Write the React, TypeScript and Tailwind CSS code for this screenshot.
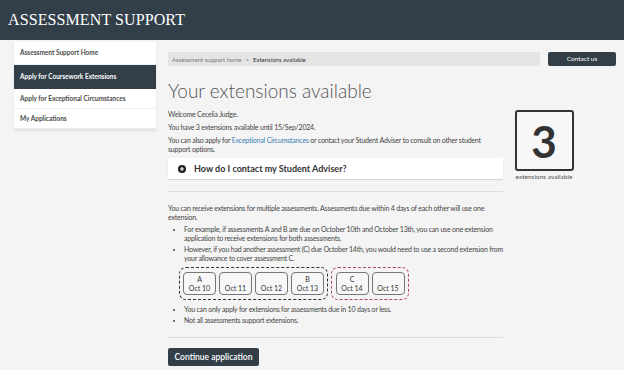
const navItems = [
  { label: "Assessment Support Home", active: false, h: "h-[23px]" },
  { label: "Apply for Coursework Extensions", active: true, h: "h-[24px]" },
  { label: "Apply for Exceptional Circumstances", active: false, h: "h-[20px]" },
  { label: "My Applications", active: false, h: "h-[20px]" },
];

const dayBoxes = [
  { letter: "A", day: "Oct 10" },
  { letter: "", day: "Oct 11" },
  { letter: "", day: "Oct 12" },
  { letter: "B", day: "Oct 13" },
];

const secondBoxes = [
  { letter: "C", day: "Oct 14" },
  { letter: "", day: "Oct 15" },
];

const DayBox = ({ letter, day }: { letter: string; day: string }) => {
  return (
    <div className="w-[33px] h-[23px] border border-[#777] rounded-[4px] bg-[#f7f7f7] flex flex-col items-center justify-center leading-[9px] text-[7px] text-[#333]">
      <span>{letter || "\u00a0"}</span>
      <span>{day}</span>
    </div>
  );
};

const App = () => {
  return (
    <div className="w-[624px] h-[370px] overflow-hidden bg-[#f4f4f4] font-['Lato',sans-serif] text-[#444]">
      <header className="h-[40px] bg-[#323e48] flex items-center px-[8px]">
        <h1 className="font-['Liberation_Serif',serif] text-white text-[16px] tracking-[0.1px]">
          ASSESSMENT SUPPORT
        </h1>
      </header>

      <div className="flex items-start">
        <nav className="ml-[14px] mt-[2px] w-[142px] flex flex-col shadow-[0_2px_2px_rgba(0,0,0,0.08)]">
          {navItems.map((item) => (
            <div
              key={item.label}
              className={
                item.active
                  ? `${item.h} flex items-center px-[6px] bg-[#323e48] text-white font-bold text-[6.5px]`
                  : `${item.h} flex items-center px-[6px] bg-white text-[#4a4a4a] font-bold text-[6.5px] border-b border-[#eee]`
              }
            >
              {item.label}
            </div>
          ))}
        </nav>

        <main className="ml-[12px] w-[448px] pt-[12px]">
          <div className="flex gap-[8px]">
            <div className="flex-1 h-[14px] bg-[#e4e4e4] flex items-center px-[4px] text-[6px]">
              <span className="text-[#777]">Assessment support home</span>
              <span className="text-[#777] mx-[4px]">&gt;</span>
              <span className="text-[#333]">Extensions available</span>
            </div>
            <button className="w-[68px] h-[14px] bg-[#323e48] rounded-[2px] text-white text-[6.5px]">
              Contact us
            </button>
          </div>

          <div className="flex">
            <div className="w-[335px]">
              <h2 className="mt-[12px] text-[19px] font-light text-[#555] leading-[26px]">
                Your extensions available
              </h2>
              <div className="mt-[6px] text-[7px] tracking-[-0.2px] leading-[9px] flex flex-col gap-[4px]">
                <p>Welcome Cecelia Judge.</p>
                <p>You have 3 extensions available until 15/Sep/2024.</p>
                <p>
                  You can also apply for <span className="text-[#3a7fb5]">Exceptional Circumstances</span> or contact
                  your Student Adviser to consult on other student support options.
                </p>
              </div>

              <div className="mt-[4px] h-[21px] bg-white flex items-center px-[10px] gap-[8px] shadow-[0_1px_1px_rgba(0,0,0,0.12)]">
                <svg width="8" height="8" viewBox="0 0 8 8">
                  <circle cx="4" cy="4" r="4" fill="#222" />
                  <path d="M4 2v4M2 4h4" stroke="#fff" strokeWidth="1.2" />
                </svg>
                <span className="text-[9px] font-bold text-[#333]">How do I contact my Student Adviser?</span>
              </div>

              <div className="mt-[12px] border-t border-[#ddd]" />

              <div className="mt-[12px] text-[7px] tracking-[-0.2px] leading-[9px]">
                <p>
                  You can receive extensions for multiple assessments. Assessments due within 4 days of each other
                  will use one extension.
                </p>
                <ul className="mt-[3px] list-disc pl-[16px] flex flex-col gap-[2px]">
                  <li>
                    For example, if assessments A and B are due on October 10th and October 13th, you can use one
                    extension application to receive extensions for both assessments.
                  </li>
                  <li>
                    However, if you had another assessment (C) due October 14th, you would need to use a second
                    extension from your allowance to cover assessment C.
                  </li>
                </ul>

                <div className="mt-[4px] ml-[11px] flex gap-[3px] tracking-normal">
                  <div className="h-[33px] px-[3px] flex items-center gap-[3px] border-[1.5px] border-dashed border-[#333] rounded-[7px]">
                    {dayBoxes.map((b) => (
                      <DayBox key={b.day} letter={b.letter} day={b.day} />
                    ))}
                  </div>
                  <div className="h-[33px] px-[3.5px] flex items-center gap-[3px] border-[1.5px] border-dashed border-[#b0446a] rounded-[7px]">
                    {secondBoxes.map((b) => (
                      <DayBox key={b.day} letter={b.letter} day={b.day} />
                    ))}
                  </div>
                </div>

                <ul className="mt-[5px] list-disc pl-[16px] flex flex-col gap-[2px]">
                  <li>You can only apply for extensions for assessments due in 10 days or less.</li>
                  <li>Not all assessments support extensions.</li>
                </ul>
              </div>

              <div className="mt-[12px] border-t border-[#ddd]" />

              <button className="mt-[10px] h-[18px] w-[91px] bg-[#323e48] rounded-[2px] text-white text-[8.5px] font-semibold">
                Continue application
              </button>
            </div>

            <div className="ml-[11px] mt-[44px] flex flex-col items-center w-[60px]">
              <div className="w-[59px] h-[61px] border-2 border-[#333] rounded-[3px] bg-[#f7f7f7] flex items-center justify-center">
                <span className="text-[44px] font-bold text-[#333] leading-none">3</span>
              </div>
              <span className="mt-[1px] text-[6.5px] text-[#555]">extensions available</span>
            </div>
          </div>
        </main>
      </div>
    </div>
  );
};

export default App;
